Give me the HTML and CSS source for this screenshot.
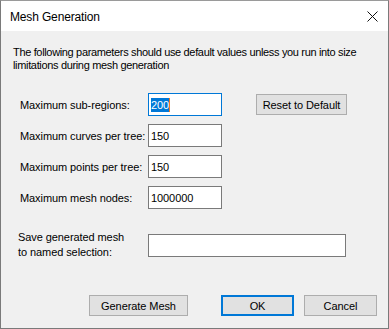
FILE: index.html
```html
<!DOCTYPE html>
<html>
<head>
<meta charset="utf-8">
<link rel="stylesheet" href="styles.css">
</head>
<body>
<div class="window">
  <div class="titlebar">
    <span class="title">Mesh Generation</span>
    <svg class="close" width="11" height="11" viewBox="0 0 11 11"><path d="M0.5 0.5 L10.5 10.5 M10.5 0.5 L0.5 10.5" stroke="#111" stroke-width="1" fill="none"/></svg>
  </div>
  <div class="content">
    <p class="desc">The following parameters should use default values unless you run into size<br>limitations during mesh generation</p>
    <div class="params">
      <div class="row">
        <span class="label">Maximum sub-regions:</span>
        <div class="field focus"><span class="sel">200</span><span class="caret"></span></div>
        <button class="btn reset">Reset to Default</button>
      </div>
      <div class="row">
        <span class="label">Maximum curves per tree:</span>
        <div class="field">150</div>
      </div>
      <div class="row">
        <span class="label">Maximum points per tree:</span>
        <div class="field">150</div>
      </div>
      <div class="row">
        <span class="label">Maximum mesh nodes:</span>
        <div class="field">1000000</div>
      </div>
    </div>
    <div class="save">
      <span class="label2">Save generated mesh<br>to named selection:</span>
      <div class="field wide"></div>
    </div>
    <div class="buttons">
      <button class="btn gen">Generate Mesh</button>
      <button class="btn ok">OK</button>
      <button class="btn cancel">Cancel</button>
    </div>
  </div>
</div>
</body>
</html>
```
FILE: styles.css
```css
html, body {
  margin: 0;
  padding: 0;
  background: #f0f0f0;
}
.window {
  width: 389px;
  height: 329px;
  box-sizing: border-box;
  border: 1px solid #7a7a7a;
  border-top-color: #9a9a9a;
  background: #f0f0f0;
  display: flex;
  flex-direction: column;
  font-family: "Liberation Sans", Arial, sans-serif;
  font-size: 11px;
  letter-spacing: -0.08px;
  color: #000;
}
.titlebar {
  height: 30px;
  background: #fff;
  display: flex;
  align-items: center;
  justify-content: space-between;
  padding: 0 10px 0 9px;
  flex: none;
}
.title {
  font-family: "Liberation Sans", Arial, sans-serif;
  font-size: 12px;
  letter-spacing: -0.15px;
  color: #000;
  position: relative;
  top: 1px;
}
.close {
  display: block;
}
.content {
  flex: 1;
  padding: 0;
}
.desc {
  margin: 15px 0 0 12px;
  line-height: 13px;
  letter-spacing: -0.34px;
  white-space: nowrap;
}
.params {
  margin-top: 21px;
  display: flex;
  flex-direction: column;
  gap: 8px;
}
.row {
  display: flex;
  align-items: center;
  height: 23px;
}
.label {
  width: 128px;
  padding-left: 19px;
  white-space: nowrap;
  flex: none;
}
.field {
  width: 74px;
  height: 23px;
  box-sizing: border-box;
  border: 1px solid #7a7a7a;
  background: #fff;
  display: flex;
  align-items: center;
  padding-left: 2px;
  flex: none;
}
.field.focus {
  border-color: #0078d7;
}
.sel {
  background: #0078d7;
  color: #fff;
  line-height: 14px;
}
.caret {
  width: 1px;
  height: 14px;
  background: #f07820;
}
.btn {
  font-family: "Liberation Sans", Arial, sans-serif;
  font-size: 11px;
  letter-spacing: -0.08px;
  color: #000;
  background: #e1e1e1;
  border: 1px solid #adadad;
  box-sizing: border-box;
  padding: 0;
  margin: 0;
  height: 21px;
}
.reset {
  width: 91px;
  height: 21px;
  margin-left: 34px;
}
.save {
  margin-top: 21px;
  display: flex;
  align-items: center;
}
.label2 {
  width: 130px;
  padding-left: 17px;
  line-height: 15px;
  white-space: nowrap;
  flex: none;
}
.field.wide {
  width: 198px;
}
.buttons {
  margin-top: 35px;
  display: flex;
  padding-left: 88px;
}
.gen {
  width: 99px;
}
.ok {
  width: 73px;
  margin-left: 33px;
  border: 2px solid #0078d7;
}
.cancel {
  width: 73px;
  margin-left: 10px;
}
```
